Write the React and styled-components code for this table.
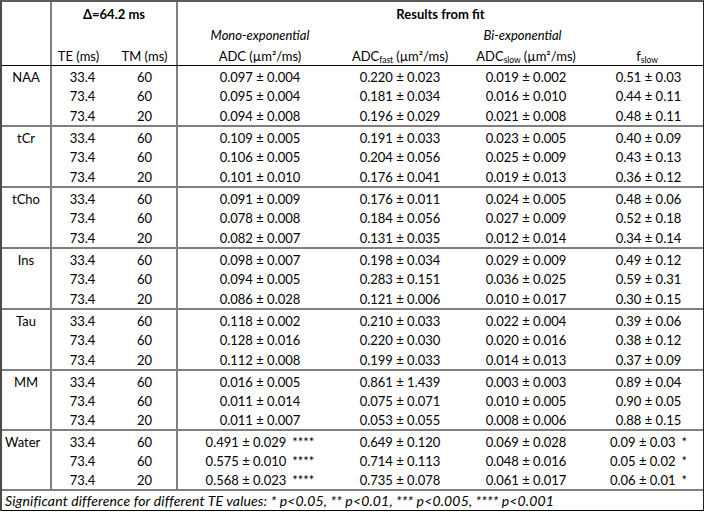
import React from 'react';
import styled, { createGlobalStyle } from 'styled-components';

const GlobalStyle = createGlobalStyle`
  html, body {
    margin: 0;
    padding: 0;
    background: #ffffff;
  }
  body {
    font-family: Lato, "Liberation Sans", sans-serif;
    font-size: 13px;
    color: #000000;
  }
`;

const GRAY = '#7f7f7f';
const RESULT_COLS = '164px 116px 136px 1fr';

const Table = styled.div`
  width: 704px;
  box-sizing: border-box;
  border-top: 2px solid #5a5a5a;
  border-left: 2px solid #4a4a4a;
  border-right: 1px solid #222;
`;

const Header = styled.div`
  display: flex;
  height: 63px;
  border-bottom: 1px solid #000;
`;

const Group = styled.div`
  display: flex;
  height: ${(p) => p.$h}px;
  border-top: ${(p) => (p.$first ? 'none' : `2px solid ${GRAY}`)};
`;

const NameCol = styled.div`
  width: 50px;
  box-sizing: border-box;
  border-right: 2px solid ${GRAY};
  display: grid;
  grid-template-rows: repeat(3, 1fr);
`;

const ParamBlock = styled.div`
  width: 126px;
  box-sizing: border-box;
  border-right: 2px solid ${GRAY};
  display: grid;
  grid-template-columns: 61px 1fr;
  grid-template-rows: repeat(3, 1fr);
`;

const ResultBlock = styled.div`
  flex: 1;
  display: grid;
  grid-template-columns: ${RESULT_COLS};
  grid-template-rows: repeat(3, 1fr);
`;

const Cell = styled.div`
  display: flex;
  align-items: center;
  justify-content: ${(p) => (p.$left ? 'flex-start' : 'center')};
  padding-left: ${(p) => (p.$left ? '3px' : '0')};
  padding-top: 2px;
  white-space: nowrap;
  grid-column: ${(p) => p.$span || 'auto'};
  font-weight: ${(p) => (p.$bold ? 700 : 400)};
  font-style: ${(p) => (p.$italic ? 'italic' : 'normal')};
  transform: ${(p) => (p.$nudge ? `translateX(${p.$nudge}px)` : 'none')};
`;

const Label = styled.span`
  display: inline-block;
  line-height: 16px;
`;

const Sub = styled.sub`
  font-size: 8.5px;
  vertical-align: -2px;
  line-height: 0;
  margin-right: 3px;
`;

const Stars = styled.span`
  margin-left: 6px;
`;

const Footnote = styled.div`
  height: 19px;
  border-top: 2px solid ${GRAY};
  border-bottom: 1px solid #000;
  display: flex;
  align-items: center;
  padding-left: 3px;
  font-style: italic;
  font-size: 14px;
  letter-spacing: 0.15px;
  white-space: nowrap;
`;

const params = [
  ['33.4', '60'],
  ['73.4', '60'],
  ['73.4', '20'],
];

const groups = [
  { name: 'NAA', h: 59, rows: [
    ['0.097 ± 0.004', '0.220 ± 0.023', '0.019 ± 0.002', '0.51 ± 0.03'],
    ['0.095 ± 0.004', '0.181 ± 0.034', '0.016 ± 0.010', '0.44 ± 0.11'],
    ['0.094 ± 0.008', '0.196 ± 0.029', '0.021 ± 0.008', '0.48 ± 0.11'],
  ] },
  { name: 'tCr', h: 59, rows: [
    ['0.109 ± 0.005', '0.191 ± 0.033', '0.023 ± 0.005', '0.40 ± 0.09'],
    ['0.106 ± 0.005', '0.204 ± 0.056', '0.025 ± 0.009', '0.43 ± 0.13'],
    ['0.101 ± 0.010', '0.176 ± 0.041', '0.019 ± 0.013', '0.36 ± 0.12'],
  ] },
  { name: 'tCho', h: 59, rows: [
    ['0.091 ± 0.009', '0.176 ± 0.011', '0.024 ± 0.005', '0.48 ± 0.06'],
    ['0.078 ± 0.008', '0.184 ± 0.056', '0.027 ± 0.009', '0.52 ± 0.18'],
    ['0.082 ± 0.007', '0.131 ± 0.035', '0.012 ± 0.014', '0.34 ± 0.14'],
  ] },
  { name: 'Ins', h: 59, rows: [
    ['0.098 ± 0.007', '0.198 ± 0.034', '0.029 ± 0.009', '0.49 ± 0.12'],
    ['0.094 ± 0.005', '0.283 ± 0.151', '0.036 ± 0.025', '0.59 ± 0.31'],
    ['0.086 ± 0.028', '0.121 ± 0.006', '0.010 ± 0.017', '0.30 ± 0.15'],
  ] },
  { name: 'Tau', h: 59, rows: [
    ['0.118 ± 0.002', '0.210 ± 0.033', '0.022 ± 0.004', '0.39 ± 0.06'],
    ['0.128 ± 0.016', '0.220 ± 0.030', '0.020 ± 0.016', '0.38 ± 0.12'],
    ['0.112 ± 0.008', '0.199 ± 0.033', '0.014 ± 0.013', '0.37 ± 0.09'],
  ] },
  { name: 'MM', h: 58, rows: [
    ['0.016 ± 0.005', '0.861 ± 1.439', '0.003 ± 0.003', '0.89 ± 0.04'],
    ['0.011 ± 0.014', '0.075 ± 0.071', '0.010 ± 0.005', '0.90 ± 0.05'],
    ['0.011 ± 0.007', '0.053 ± 0.055', '0.008 ± 0.006', '0.88 ± 0.15'],
  ] },
  { name: 'Water', h: 58, left: true, rows: [
    ['0.491 ± 0.029|****', '0.649 ± 0.120', '0.069 ± 0.028', '0.09 ± 0.03|*'],
    ['0.575 ± 0.010|****', '0.714 ± 0.113', '0.048 ± 0.016', '0.05 ± 0.02|*'],
    ['0.568 ± 0.023|****', '0.735 ± 0.078', '0.061 ± 0.017', '0.06 ± 0.01|*'],
  ] },
];

function Value({ text }) {
  const [num, stars] = text.split('|');
  return (
    <Cell>
      {num}
      {stars && <Stars>{stars}</Stars>}
    </Cell>
  );
}

export default function App() {
  return (
    <>
      <GlobalStyle />
      <Table>
        <Header>
          <NameCol />
          <ParamBlock>
            <Cell $span="1 / 3" $bold>Δ=64.2 ms</Cell>
            <Cell $span="1 / 3" />
            <Cell $nudge={-4}>TE (ms)</Cell>
            <Cell>TM (ms)</Cell>
          </ParamBlock>
          <ResultBlock>
            <Cell $span="1 / 5" $bold>Results from fit</Cell>
            <Cell $italic>Mono-exponential</Cell>
            <Cell $span="2 / 5" $italic>Bi-exponential</Cell>
            <Cell>ADC (µm²/ms)</Cell>
            <Cell><Label>ADC<Sub>fast</Sub>(µm²/ms)</Label></Cell>
            <Cell><Label>ADC<Sub>slow</Sub>(µm²/ms)</Label></Cell>
            <Cell><Label>f<Sub>slow</Sub></Label></Cell>
          </ResultBlock>
        </Header>

        {groups.map((g, gi) => (
          <Group key={g.name} $h={g.h} $first={gi === 0}>
            <NameCol>
              <Cell $left={g.left}>{g.name}</Cell>
            </NameCol>
            <ParamBlock>
              {params.map(([te, tm], i) => (
                <React.Fragment key={i}>
                  <Cell>{te}</Cell>
                  <Cell>{tm}</Cell>
                </React.Fragment>
              ))}
            </ParamBlock>
            <ResultBlock>
              {g.rows.map((row, ri) =>
                row.map((v, ci) => <Value key={`${ri}-${ci}`} text={v} />)
              )}
            </ResultBlock>
          </Group>
        ))}

        <Footnote>
          Significant difference for different TE values: * p&lt;0.05, ** p&lt;0.01, *** p&lt;0.005, **** p&lt;0.001
        </Footnote>
      </Table>
    </>
  );
}
